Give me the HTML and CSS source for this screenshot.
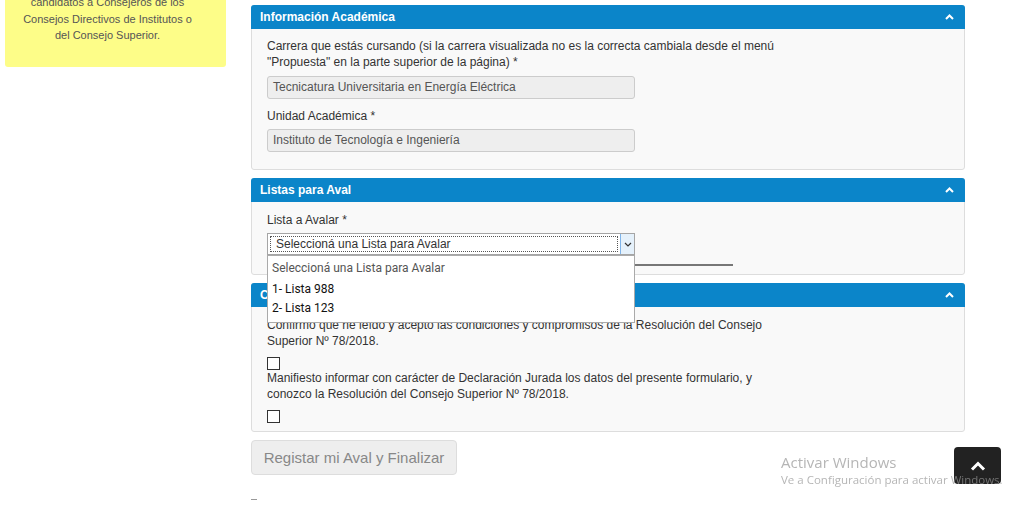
FILE: index.html
```html
<!DOCTYPE html>
<html lang="es">

<head>
    <meta charset="UTF-8">
    <meta name="viewport" content="width=device-width, initial-scale=1.0">
    <title>Aval de Listas</title>
    <link rel="stylesheet" href="styles.css">
</head>

<body>
    <div class="page">
        <aside class="sidebar">
            <div class="note">
                candidatos a Consejeros de los<br>
                Consejos Directivos de Institutos o<br>
                del Consejo Superior.
            </div>
        </aside>

        <main class="content">
            <div class="panel">
                <div class="panel-heading">
                    <span>Información Académica</span>
                    <svg class="chevron" width="9" height="6" viewBox="0 0 9 6"><path d="M1 5 L4.5 1.5 L8 5" fill="none" stroke="#fff" stroke-width="2"/></svg>
                </div>
                <div class="panel-body">
                    <div class="field">
                        <label>Carrera que estás cursando (si la carrera visualizada no es la correcta cambiala desde el menú "Propuesta" en la parte superior de la página) *</label>
                        <div class="text-input">Tecnicatura Universitaria en Energía Eléctrica</div>
                    </div>
                    <div class="field">
                        <label>Unidad Académica *</label>
                        <div class="text-input">Instituto de Tecnología e Ingeniería</div>
                    </div>
                </div>
            </div>

            <div class="panel">
                <div class="panel-heading">
                    <span>Listas para Aval</span>
                    <svg class="chevron" width="9" height="6" viewBox="0 0 9 6"><path d="M1 5 L4.5 1.5 L8 5" fill="none" stroke="#fff" stroke-width="2"/></svg>
                </div>
                <div class="panel-body panel-body-short">
                    <div class="field">
                        <label>Lista a Avalar *</label>
                        <div class="select-wrap">
                            <div class="select">
                                <span class="select-value">Seleccioná una Lista para Avalar</span>
                                <span class="select-arrow">
                                    <svg width="8" height="5" viewBox="0 0 8 5"><path d="M1 1 L4 4 L7 1" fill="none" stroke="#333" stroke-width="1.2"/></svg>
                                </span>
                            </div>
                            <ul class="dropdown">
                                <li class="muted">Seleccioná una Lista para Avalar</li>
                                <li>1- Lista 988</li>
                                <li>2- Lista 123</li>
                            </ul>
                        </div>
                        <div class="rule"></div>
                    </div>
                </div>
            </div>

            <div class="panel">
                <div class="panel-heading">
                    <span>Condiciones</span>
                    <svg class="chevron" width="9" height="6" viewBox="0 0 9 6"><path d="M1 5 L4.5 1.5 L8 5" fill="none" stroke="#fff" stroke-width="2"/></svg>
                </div>
                <div class="panel-body panel-body-terms">
                    <p>Confirmo que he leído y acepto las condiciones y compromisos de la Resolución del Consejo Superior Nº 78/2018.</p>
                    <span class="checkbox"></span>
                    <p>Manifiesto informar con carácter de Declaración Jurada los datos del presente formulario, y conozco la Resolución del Consejo Superior Nº 78/2018.</p>
                    <span class="checkbox"></span>
                </div>
            </div>

            <button class="text-button">Registar mi Aval y Finalizar</button>
            <div class="dash"></div>
        </main>
    </div>

    <a class="to-top" href="#">
        <svg width="16" height="10" viewBox="0 0 16 10"><path d="M2 8.5 L8 2.5 L14 8.5" fill="none" stroke="#fff" stroke-width="3"/></svg>
    </a>

    <div class="watermark">
        <div class="wm-title">Activar Windows</div>
        <div class="wm-sub">Ve a Configuración para activar Windows.</div>
    </div>
</body>

</html>
```

FILE: styles.css
```css
html, body {
    margin: 0;
    padding: 0;
    background-color: white;
}

body {
    font-family: "Liberation Sans", Arial, sans-serif;
    font-size: 12px;
    color: #333;
    line-height: 16px;
}

.page {
    display: flex;
    align-items: flex-start;
    gap: 25px;
    padding-left: 5px;
}

.sidebar {
    width: 221px;
    flex-shrink: 0;
}

.note {
    background-color: #fdfd88;
    color: #555;
    text-align: center;
    font-size: 11px;
    line-height: 16.5px;
    margin-top: -6px;
    padding: 0 24px 23px 8px;
    border-radius: 0 0 3px 3px;
}

.content {
    width: 714px;
    padding-top: 5px;
}

.panel {
    border: 1px solid #ddd;
    border-radius: 3px;
    background-color: #f9f9f9;
    margin-bottom: 8px;
}

.panel-heading {
    background-color: #0b85c9;
    color: white;
    font-weight: bold;
    height: 24px;
    margin: -1px -1px 0;
    padding: 0 10px 0 9px;
    display: flex;
    justify-content: space-between;
    align-items: center;
    border-radius: 3px 3px 0 0;
}

.chevron {
    margin-right: 1px;
}

.panel-body {
    padding: 9px 15px 17px;
}

.panel-body-short {
    padding: 10px 15px 8px;
}

.panel-body-terms {
    padding: 10px 15px 8px;
}

.field label {
    display: block;
    width: 510px;
    margin-bottom: 6px;
}

.field + .field {
    margin-top: 9px;
}

.field + .field label,
.panel-body-short .field label {
    margin-bottom: 5px;
}

.text-input {
    width: 356px;
    height: 21px;
    line-height: 21px;
    padding: 0 5px;
    background-color: #eee;
    border: 1px solid #ccc;
    border-radius: 3px;
    color: #555;
}

.select-wrap {
    position: relative;
    width: 368px;
}

.select {
    height: 20px;
    border: 1px solid #a5a5a5;
    display: flex;
    background-color: white;
}

.select-value {
    flex: 1;
    margin: 2px;
    padding-left: 5px;
    line-height: 14px;
    border: 1px dotted #555;
    color: #333;
}

.select-arrow {
    width: 13px;
    background-color: #e5f1fb;
    border-left: 1px solid #7eb4ea;
    display: flex;
    align-items: center;
    justify-content: center;
}

.dropdown {
    position: absolute;
    top: 22px;
    left: 0;
    width: 366px;
    margin: 0;
    padding: 3px 0 4px;
    list-style: none;
    background-color: white;
    border: 1px solid #aaa;
    z-index: 2;
    font-family: Roboto, "Liberation Sans", sans-serif;
}

.dropdown li {
    padding-left: 4px;
    height: 19px;
    line-height: 19px;
    color: #111;
}

.dropdown li.muted {
    color: #555;
    height: 21px;
}

.rule {
    width: 466px;
    border-top: 2px solid #777;
    margin-top: 9px;
}

.panel-body-terms p {
    width: 500px;
    margin: 0;
}

.checkbox {
    display: block;
    width: 11px;
    height: 11px;
    border: 1px solid #333;
    background-color: white;
    margin: 8px 0 0;
}

.text-button {
    display: block;
    font-family: "Liberation Sans", Arial, sans-serif;
    font-size: 15px;
    color: #888;
    background-color: #eee;
    border: 1px solid #ddd;
    border-radius: 4px;
    width: 206px;
    height: 35px;
    padding: 0;
    margin-top: 0;
}

.dash {
    width: 6px;
    border-top: 1px solid #999;
    margin-top: 24px;
}

.watermark {
    position: fixed;
    left: 781px;
    top: 452px;
    color: rgba(150, 150, 150, 0.7);
    font-family: "Open Sans", "Noto Sans", sans-serif;
    z-index: 4;
}

.wm-title {
    font-size: 15px;
    line-height: 20px;
}

.wm-sub {
    font-size: 11.5px;
    line-height: 16px;
}

.to-top {
    position: fixed;
    left: 954px;
    top: 447px;
    width: 47px;
    height: 37px;
    background-color: #222;
    border-radius: 4px;
    display: flex;
    align-items: center;
    justify-content: center;
    z-index: 3;
}
```
